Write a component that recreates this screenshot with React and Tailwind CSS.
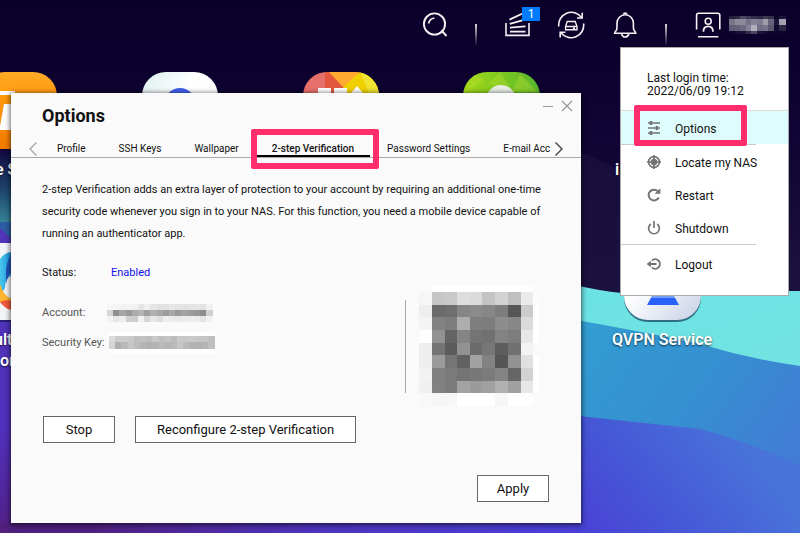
import React from "react";

function Wallpaper() {
  return (
    <svg className="absolute inset-0 h-full w-full" viewBox="0 0 800 533" preserveAspectRatio="none" aria-hidden="true">
      <defs>
        <linearGradient id="night" x1="0" y1="0" x2="0" y2="1">
          <stop offset="0" stopColor="#0b0029" />
          <stop offset="0.25" stopColor="#0f0433" />
          <stop offset="0.6" stopColor="#20123f" />
        </linearGradient>
        <linearGradient id="lagoon" x1="0" y1="150" x2="0" y2="235" gradientUnits="userSpaceOnUse">
          <stop offset="0" stopColor="#120940" />
          <stop offset="0.5" stopColor="#1f4a72" />
          <stop offset="1" stopColor="#3f9da6" />
        </linearGradient>
        <linearGradient id="aqua" x1="0" y1="0" x2="1" y2="1">
          <stop offset="0" stopColor="#6be2e4" />
          <stop offset="1" stopColor="#72e4e2" />
        </linearGradient>
        <linearGradient id="azure" x1="580" y1="320" x2="800" y2="480" gradientUnits="userSpaceOnUse">
          <stop offset="0" stopColor="#329dd2" />
          <stop offset="0.5" stopColor="#368fd0" />
          <stop offset="1" stopColor="#4379d6" />
        </linearGradient>
        <linearGradient id="iris" x1="580" y1="520" x2="720" y2="410" gradientUnits="userSpaceOnUse">
          <stop offset="0" stopColor="#4943d6" />
          <stop offset="0.4" stopColor="#4657d6" />
          <stop offset="1" stopColor="#4874da" />
        </linearGradient>
        <linearGradient id="violet" x1="0" y1="240" x2="0" y2="533" gradientUnits="userSpaceOnUse">
          <stop offset="0" stopColor="#5135b8" />
          <stop offset="0.65" stopColor="#5030bd" />
          <stop offset="1" stopColor="#522084" />
        </linearGradient>
        <linearGradient id="shore" x1="0" y1="0" x2="580" y2="0" gradientUnits="userSpaceOnUse">
          <stop offset="0" stopColor="#50207c" />
          <stop offset="0.15" stopColor="#4f207f" />
          <stop offset="0.55" stopColor="#4e34bd" />
          <stop offset="1" stopColor="#4a40d8" />
        </linearGradient>
      </defs>
      <rect width="800" height="533" fill="url(#night)" />
      <path d="M570 147 Q610 163 660 195 L740 250 L800 240 V300 H570Z" fill="#1b1240" opacity="0.7" />
      <path d="M570 284 Q600 291 622 293 L790 291 H800 V370 L570 330Z" fill="url(#aqua)" />
      <path d="M570 319 Q640 331 700 344 Q750 359 800 366 V480 H570Z" fill="url(#azure)" />
      <path d="M570 415 L700 429 Q745 440 800 466 V533 H570Z" fill="url(#iris)" />
      <rect y="150" width="30" height="85" fill="url(#lagoon)" />
      <path d="M0 222 H30 V260 H0Z" fill="#2d5da3" />
      <path d="M0 228 L18 245 V533 H0Z" fill="url(#violet)" />
      <rect y="523" width="581" height="10" fill="url(#shore)" />
    </svg>
  );
}

function DesktopArt() {
  return (
    <svg className="absolute left-0 top-0" width="800" height="330" viewBox="0 0 800 330" aria-hidden="true">
      <defs>
        <linearGradient id="orange" x1="0" y1="0" x2="0" y2="1">
          <stop offset="0" stopColor="#ffac27" />
          <stop offset="0.3" stopColor="#ff9a0c" />
          <stop offset="1" stopColor="#f57c00" />
        </linearGradient>
        <linearGradient id="pearl" x1="0" y1="0" x2="1" y2="1">
          <stop offset="0" stopColor="#dceff0" />
          <stop offset="0.4" stopColor="#ffffff" />
        </linearGradient>
        <linearGradient id="lime" x1="0" y1="0" x2="1" y2="0">
          <stop offset="0" stopColor="#a4d916" />
          <stop offset="1" stopColor="#55b52e" />
        </linearGradient>
        <linearGradient id="silver" x1="0" y1="0" x2="1" y2="1">
          <stop offset="0.4" stopColor="#ffffff" />
          <stop offset="1" stopColor="#c6cfe4" />
        </linearGradient>
        <linearGradient id="sky" x1="0" y1="0" x2="1" y2="0">
          <stop offset="0" stopColor="#49c7ec" />
          <stop offset="1" stopColor="#1d8fe0" />
        </linearGradient>
        <clipPath id="gallery"><rect x="303" y="72" width="76" height="77" rx="24" /></clipPath>
        <clipPath id="leaf"><rect x="463" y="72" width="77" height="77" rx="24" /></clipPath>
      </defs>
      <rect x="-19" y="72" width="76" height="77" rx="24" fill="url(#orange)" />
      <path d="M0 149 V140 H20 V149Z" fill="#f57c00" />
      <path d="M0 91 H15 V95 H0Z M4 104 H11 V130 H0 V126Z" fill="#fff" />
      <rect x="142" y="72" width="76" height="77" rx="24" fill="url(#pearl)" />
      <circle cx="180" cy="104" r="16" fill="#3f63ee" />
      <g clipPath="url(#gallery)">
        <rect x="303" y="72" width="76" height="77" fill="#e8706b" />
        <path d="M325 72 H350 V100 H325Z" fill="#e4573f" />
        <path d="M329 72 H362 L343 87Z" fill="#ffa931" />
        <path d="M360 72 L343 87 L350 100 H380 V72Z" fill="#f1d000" />
        <path d="M360 72 L372 100 H380 V72Z" fill="#f0e332" />
        <path d="M318 88 H331 V100 H318Z M334 88 H347 V100 H334Z M351 93 L357 86 L363 93Z" fill="#fff" />
      </g>
      <g clipPath="url(#leaf)">
        <rect x="463" y="72" width="77" height="77" fill="url(#lime)" />
        <path d="M470 72 L484 80 L466 92Z M500 72 L512 90 L488 84Z M520 74 L538 92 L512 92Z" fill="#b7df2c" opacity="0.4" />
        <circle cx="501" cy="100" r="15" fill="#e9efe4" />
      </g>
      <rect x="-19" y="245" width="76" height="77" rx="10" fill="#10104a" opacity="0.6" />
      <rect x="-30" y="243" width="76" height="77" rx="4" fill="#f3f4f8" />
      <path d="M0 259 Q5 252 12 252 V275 Q5 278 5 288 L0 296Z" fill="url(#sky)" />
      <path d="M6 269 Q8 257 12 254 V272 Q8 274 6 284Z" fill="#1f54bd" />
      <path d="M0 284 Q4 297 12 299 V303 H0Z" fill="#ffb52e" />
      <path d="M0 302 Q5 299 12 301 V310 Q5 309 0 302Z" fill="#f1583f" />
      <rect x="624" y="245" width="77" height="77" rx="24" fill="#153b59" opacity="0.7" />
      <rect x="624" y="243" width="77" height="77" rx="24" fill="url(#silver)" />
      <path d="M652 296 H674 L679 305 H647Z" fill="#2962f6" />
      <path d="M651 297 H675" stroke="#c6d5fb" />
    </svg>
  );
}

const label = "absolute whitespace-nowrap text-[16px] leading-5 font-semibold text-white [text-shadow:0_1px_2px_#000000b0]";

function MosaicRow({ width, height, cell, rows, x = 0 }) {
  return (
    <svg width={width} height={height} aria-hidden="true" className="block shrink-0" shapeRendering="crispEdges">
      {rows.map((row, r) =>
        row.colors.map((c, i) => (
          <rect key={`${r}-${i}`} x={x + i * cell} y={row.y} width={cell + 1} height={row.h} fill={c} />
        ))
      )}
    </svg>
  );
}

const accountRows = [
  { y: 0, h: 6, colors: ["#f8f8f8", "#f5f5f5", "#f3f3f3", "#f4f4f4", "#f2f2f2", "#e6e6e6", "#f1f1f1", "#e5e5e5", "#e2e2e2", "#e3e3e3", "#e6e6e6", "#e4e4e4", "#e3e3e3", "#e5e5e5", "#e6e6e6", "#e3e3e3", "#f1f1f1"] },
  { y: 6, h: 6, colors: ["#d6d6d6", "#8f8f8f", "#a5a5a5", "#9a9a9a", "#acacac", "#b5b5b5", "#a0a0a0", "#b0b0b0", "#a7a7a7", "#9c9c9c", "#a8a8a8", "#999999", "#a3a3a3", "#9d9d9d", "#979797", "#8d8d8d", "#d0d0d0"] },
  { y: 12, h: 6, colors: ["#f4f4f4", "#e6e6e6", "#eeeeee", "#cfcfcf", "#cecece", "#f1f1f1", "#d6d6d6", "#e7e7e7", "#dddddd", "#eeeeee", "#ebebeb", "#e9e9e9", "#ececec", "#eeeeee", "#ececec", "#e5e5e5", "#f1f1f1"] },
];

const keyRows = [
  { y: 0, h: 4, colors: Array(17).fill("#ffffff") },
  { y: 4, h: 6, colors: ["#dadada", "#cccccc", "#cdcdcd", "#c9c9c9", "#bfbfbf", "#c2c2c2", "#bdbdbd", "#c8c8c8", "#c0c0c0", "#c4c4c4", "#bcbcbc", "#c9c9c9", "#c7c7c7", "#cacaca", "#c5c5c5", "#c6c6c6", "#bfbfbf"] },
  { y: 10, h: 7, colors: ["#d4d4d4", "#b0b0b0", "#bababa", "#c6c6c6", "#bdbdbd", "#b5b5b5", "#b1b1b1", "#b3b3b3", "#bababa", "#b5b5b5", "#b9b9b9", "#c5c5c5", "#b9b9b9", "#b2b2b2", "#b1b1b1", "#b5b5b5", "#c0c0c0"] },
  { y: 17, h: 5, colors: Array(17).fill("#fefefe") },
];

const nameRows = [
  { y: 0, h: 3, colors: ["#24203c", "#2e2a44", "#4b475e", "#3e3a55", "#322e4b", "#2c2847", "#3d3954", "#33304b", "#0d0329", "#1b1438"] },
  { y: 3, h: 6, colors: ["#77748a", "#8b899a", "#8a8899", "#747189", "#85839a", "#7d7b90", "#a09eac", "#66637a", "#1d163b", "#a4a2ae"] },
  { y: 9, h: 6, colors: ["#605d74", "#65627a", "#6e6b81", "#838097", "#b0aebb", "#706d84", "#77748a", "#5b5870", "#120a30", "#2b2644"] },
  { y: 15, h: 3, colors: ["#0e052c", "#171034", "#1b1438", "#332e4c", "#4b4760", "#1c1538", "#120a30", "#0e052c", "#0e052c", "#0e052c"] },
];

const qrCells = [
  ["#fafafa", "#ffffff", "#ffffff", "#ffffff", "#ffffff", "#ffffff", "#ffffff", "#ffffff", "#ffffff", "#fafafa"],
  ["#f6f6f6", "#c6c6c6", "#c9c9c9", "#dedede", "#dbdbdb", "#c4c4c4", "#d2d2d2", "#c0c0c0", "#ebebeb", "#fcfcfc"],
  ["#eeeeee", "#6b6b6b", "#6f6f6f", "#858585", "#8b8b8b", "#878787", "#7d7d7d", "#565656", "#cbcbcb", "#ffffff"],
  ["#f4f4f4", "#828282", "#7d7d7d", "#aeaeae", "#7e7e7e", "#7d7d7d", "#8d8d8d", "#878787", "#dbdbdb", "#ffffff"],
  ["#fefefe", "#929292", "#646464", "#848484", "#747474", "#717171", "#838383", "#7d7d7d", "#e8e8e8", "#ffffff"],
  ["#eeeeee", "#747474", "#5b5b5b", "#929292", "#6b6b6b", "#777777", "#5d5d5d", "#717171", "#f3f3f3", "#fafafa"],
  ["#eeeeee", "#9b9b9b", "#757575", "#616161", "#a2a2a2", "#828282", "#555555", "#919191", "#e0e0e0", "#ffffff"],
  ["#f2f2f2", "#808080", "#7a7a7a", "#747474", "#777777", "#7b7b7b", "#838383", "#666666", "#d2d2d2", "#ffffff"],
  ["#f0f0f0", "#818181", "#7b7b7b", "#a3a3a3", "#9b9b9b", "#a0a0a0", "#b1b1b1", "#a0a0a0", "#e7e7e7", "#ffffff"],
  ["#f8f8f8", "#f6f6f6", "#f7f7f7", "#ffffff", "#ffffff", "#ffffff", "#f6f6f6", "#fefefe", "#fefefe", "#fafafa"],
];
const qrX = [0, 38, 77, 115, 152, 190, 229, 267, 305, 342, 359];
const qrY = [0, 18, 56, 94, 132, 170, 207, 245, 284, 322, 360];

function QrCode() {
  return (
    <svg width="120" height="120" viewBox="0 0 360 360" role="img" aria-label="QR code" shapeRendering="crispEdges" className="block">
      {qrCells.map((row, r) =>
        row.map((c, i) => (
          <rect key={`${r}-${i}`} x={qrX[i]} y={qrY[r]} width={qrX[i + 1] - qrX[i]} height={qrY[r + 1] - qrY[r]} fill={c} />
        ))
      )}
    </svg>
  );
}

function BarIcon({ children }) {
  return (
    <svg width="28" height="28" viewBox="0 0 28 28" fill="none" stroke="#f2f2f2" strokeWidth="1.6" aria-hidden="true" className="block">
      {children}
    </svg>
  );
}

function BarDivider() {
  return <span className="mt-[20px] h-[22px] w-[2px] bg-linear-to-b from-[#d5d3da] to-transparent" />;
}

function TopBar() {
  return (
    <header className="relative flex h-[47px] items-center justify-end gap-[26px] pr-[14px] pb-[4px] pt-[7px]">
      <button aria-label="Search">
        <BarIcon>
          <circle cx="13.5" cy="13" r="10.6" strokeWidth="1.9" />
          <path d="M20.5 19.5 L25.5 25" strokeWidth="1.9" />
          <path d="M7.6 12.5 Q8.4 7.9 13.5 7" strokeWidth="1.7" />
        </BarIcon>
      </button>
      <BarDivider />
      <button aria-label="Background tasks" className="relative">
        <BarIcon>
          <path d="M3 12 V24.4 H26 V12" />
          <path d="M7 20.6 H22.5 M7 16.6 L22.5 15.4 M6.8 12.8 L21 8.8 M6.5 8.6 L19 2.8" strokeWidth="1.8" />
        </BarIcon>
        <span className="absolute left-[19px] -top-[4px] flex h-[14px] w-[18px] items-center justify-center bg-[#007bff] text-[12px] leading-none text-white">1</span>
      </button>
      <button aria-label="External devices">
        <BarIcon>
          <path d="M1.8 15.5 A12.6 12.6 0 0 1 24.5 6.5 M26.6 12.5 A12.6 12.6 0 0 1 4 21.7" />
          <path d="M25.2 1.8 V7 H20 M3.2 26.4 V21.2 H8.4" />
          <path d="M10.2 10.5 H18.2 L20 15.5 V18.8 H8.6 V15.5Z M8.6 15.5 H20 M16 17.3 H18" strokeWidth="1.4" />
        </BarIcon>
      </button>
      <button aria-label="Notifications">
        <BarIcon>
          <path d="M3.6 22.2 Q3.6 20.8 5 19.8 Q6 18.8 6 16 V12 A8.2 8.2 0 0 1 22.4 12 V16 Q22.4 18.8 23.4 19.8 Q24.8 20.8 24.8 22.2Z" />
          <path d="M12.6 3.6 Q12.6 2 14.2 2 Q15.8 2 15.8 3.6 M10.5 22.5 Q11.2 26 14.2 26 Q17.2 26 17.9 22.5" />
        </BarIcon>
      </button>
      <BarDivider />
      <button aria-label="User menu" className="flex items-center gap-2">
        <BarIcon>
          <path d="M3.6 18.5 V4.2 Q3.6 2.2 5.6 2.2 H24.6 Q26.8 2.2 26.8 4.2 V18.5 M5 25.8 H25.4" />
          <circle cx="15.2" cy="10.2" r="3" />
          <path d="M10.4 20.8 Q10.4 15.4 15.2 15.4 Q20 15.4 20 20.8" strokeWidth="1.8" />
        </BarIcon>
        <MosaicRow width={57} height={18} cell={5.6} rows={nameRows} />
      </button>
    </header>
  );
}

function MenuItem({ icon, children, active }) {
  return (
    <li>
      <button className={`flex h-[33px] w-full items-center gap-[13px] pl-[25px] pt-[2px] text-left whitespace-nowrap ${active ? "bg-[#dffcfc]" : ""}`}>
        <svg width="16" height="16" viewBox="0 0 16 16" fill="none" stroke="#737373" strokeWidth="1.7" aria-hidden="true" className="-mt-[2px] shrink-0">
          {icon}
        </svg>
        {children}
      </button>
    </li>
  );
}

function UserMenu() {
  return (
    <nav aria-label="User menu" className="absolute right-[11px] top-[47px] w-[169px] border border-[#aaa] bg-white text-[12px] leading-[14px] text-[#111]">
      <p className="h-[63px] border-b border-[#ddd] pl-[26px] pt-[24px] leading-[13px]">
        Last login time:
        <br />
        2022/06/09 19:12
      </p>
      <ul>
        <MenuItem
          active
          icon={
            <>
              <path d="M2 3 H14 M2 8 H14 M2 13 H14" />
              <path d="M5 1 V5 M11 6 V10 M5 11 V15" strokeWidth="2.4" />
            </>
          }
        >
          Options
        </MenuItem>
      </ul>
      <ul className="mr-[32px] border-y border-[#ccc]">
        <MenuItem
          icon={
            <>
              <circle cx="8" cy="8" r="5.4" />
              <circle cx="8" cy="8" r="2.4" fill="#737373" />
              <path d="M8 1 V15 M1 8 H15" />
            </>
          }
        >
          Locate my NAS
        </MenuItem>
        <MenuItem
          icon={
            <>
              <path d="M12.8 10.5 A5.4 5.4 0 1 1 12 4.4" strokeWidth="2" />
              <path d="M14.4 1.2 V6.8 H8.6Z" fill="#737373" stroke="none" />
            </>
          }
        >
          Restart
        </MenuItem>
        <MenuItem
          icon={
            <>
              <path d="M4.8 4 A5.4 5.4 0 1 0 11.2 4 M8 1 V8" />
            </>
          }
        >
          Shutdown
        </MenuItem>
      </ul>
      <ul className="pb-[15px] pt-[2px]">
        <MenuItem
          icon={
            <>
              <path d="M6 4.6 A4.7 4.7 0 1 1 6 11.4 M3 8 H10.4" strokeWidth="1.9" />
              <path d="M0.6 8 L4.8 4.8 V11.2Z" fill="#737373" stroke="none" />
            </>
          }
        >
          Logout
        </MenuItem>
      </ul>
    </nav>
  );
}

function ActionButton({ children, wide }) {
  return (
    <button className={`h-[27px] border border-[#666] bg-white text-[13px] leading-none text-[#111] ${wide ? "px-[21px]" : "w-[72px]"}`}>
      {children}
    </button>
  );
}

const tabs = ["Profile", "SSH Keys", "Wallpaper", "2-step Verification", "Password Settings", "E-mail Acc"];

function OptionsWindow() {
  return (
    <section aria-label="Options" className="absolute left-[11px] top-[93px] w-[570px] bg-[#fafafa] text-[#111] shadow-[0_1px_5px_1px_#00000099]">
      <div className="flex h-[46px] items-center justify-between pl-[31px] pr-2">
        <h1 className="text-[18px] leading-6 font-bold">Options</h1>
        <div className="flex gap-[7px] self-start pt-[7px]">
          <button aria-label="Minimize">
            <svg width="12" height="12" viewBox="0 0 12 12" stroke="#999" aria-hidden="true"><path d="M1 6.5 H11" /></svg>
          </button>
          <button aria-label="Close">
            <svg width="12" height="12" viewBox="0 0 12 12" stroke="#999" strokeWidth="1.2" aria-hidden="true"><path d="M1 1 L11 11 M11 1 L1 11" /></svg>
          </button>
        </div>
      </div>
      <div className="flex h-[19px] items-stretch border-b border-[#aaa] pl-[17px] text-[10px] leading-[16px]">
        <button aria-label="Previous tabs" className="mr-[3px] pt-[2px]">
          <svg width="10" height="16" viewBox="0 0 10 16" fill="none" stroke="#aaa" strokeWidth="1.4" aria-hidden="true"><path d="M8.5 1.5 L2 8 L8.5 14.5" /></svg>
        </button>
        <div role="tablist" className="flex gap-px">
          {tabs.map((t) => {
            const active = t === "2-step Verification";
            return (
              <button
                key={t}
                role="tab"
                aria-selected={active}
                className={`whitespace-nowrap border-b-2 px-4 pt-[2px] last:pr-[4px] ${active ? "border-black font-medium" : "border-transparent"}`}
              >
                {t}
              </button>
            );
          })}
        </div>
        <button aria-label="Next tabs" className="pt-[2px]">
          <svg width="10" height="16" viewBox="0 0 10 16" fill="none" stroke="#444" strokeWidth="1.4" aria-hidden="true"><path d="M1.5 1.5 L8 8 L1.5 14.5" /></svg>
        </button>
      </div>
      <div className="px-[31px] pb-[21px] pt-[21px] text-[11px] leading-[22px]">
        <p>
          2-step Verification adds an extra layer of protection to your account by requiring an additional one-time
          security code whenever you sign in to your NAS. For this function, you need a mobile device capable of
          running an authenticator app.
        </p>
        <div className="flex justify-between pt-[17px]">
          <dl className="grid grid-cols-[65px_1fr] content-start gap-y-2">
            <dt>Status:</dt>
            <dd className="mb-[10px] pl-1 text-[#1010ee]">Enabled</dd>
            <dt className="text-[#555]">Account:</dt>
            <dd className="flex items-center"><MosaicRow width={108} height={18} cell={6.2} rows={accountRows} /></dd>
            <dt className="whitespace-nowrap text-[#555]">Security Key:</dt>
            <dd className="flex items-center"><MosaicRow width={108} height={22} cell={6.2} rows={keyRows} x={2} /></dd>
          </dl>
          <div className="mr-[11px] flex items-center gap-[13px] pt-[24px]">
            <span className="h-[93px] w-px bg-[#aaa]" />
            <QrCode />
          </div>
        </div>
        <div className="mt-[10px] flex gap-5 px-px">
          <ActionButton>Stop</ActionButton>
          <ActionButton wide>Reconfigure 2-step Verification</ActionButton>
        </div>
        <div className="mt-8 flex justify-end px-px">
          <ActionButton>Apply</ActionButton>
        </div>
      </div>
    </section>
  );
}

export default function App() {
  return (
    <main className="relative h-screen overflow-hidden bg-[#0e0430] font-[Roboto,sans-serif]">
      <Wallpaper />
      <DesktopArt />
      <span className={`${label} -left-[5px] top-[160px]`}>e S</span>
      <span className={`${label} -left-[6px] top-[330px]`}>ult</span>
      <span className={`${label} left-0 top-[351px]`}>or</span>
      <span className={`${label} left-[615px] top-[160px]`}>i</span>
      <span className={`${label} left-[612px] top-[330px]`}>QVPN Service</span>
      <TopBar />
      <OptionsWindow />
      <UserMenu />
      <div className="pointer-events-none absolute left-[251px] top-[129px] h-[40px] w-[128px] rounded-[2px] border-6 border-[#ff2d6c]" />
      <div className="pointer-events-none absolute right-[53px] top-[105px] h-[41px] w-[113px] rounded-[2px] border-6 border-[#ff2d6c]" />
    </main>
  );
}
